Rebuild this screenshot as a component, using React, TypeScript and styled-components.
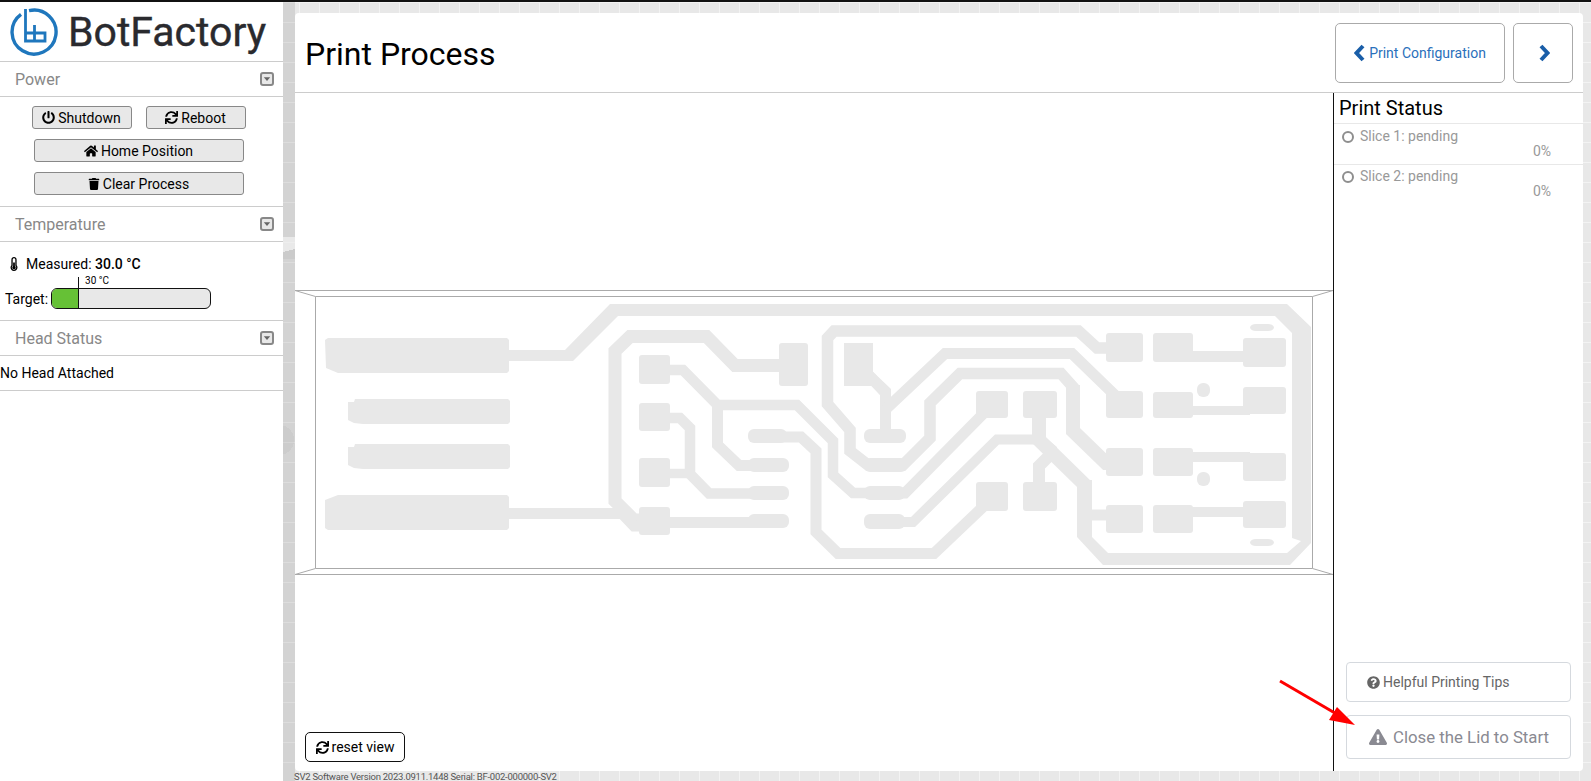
import React from "react";
import styled, { createGlobalStyle } from "styled-components";
import {
  FaExclamationTriangle,
  FaHome,
  FaPowerOff,
  FaQuestionCircle,
  FaSync,
  FaThermometerHalf,
  FaTrash,
} from "react-icons/fa";

const GlobalStyle = createGlobalStyle`
  html, body {
    margin: 0;
    height: 100%;
    overflow: hidden;
  }
  body {
    font-family: Roboto, "Liberation Sans", sans-serif;
    font-size: 14px;
    color: #000;
    background-color: #e8e8e8;
    background-image:
      linear-gradient(to right, #f3f3f3 1px, transparent 1px),
      linear-gradient(to bottom, #f3f3f3 1px, transparent 1px);
    background-size: 20px 20px;
    background-position: 19px 2px;
  }
  * {
    box-sizing: border-box;
  }
`;

const Shell = styled.div`
  position: relative;
  display: grid;
  grid-template-columns: 283px 12px 1fr;
  height: 781px;
  border-top: 2px solid #111;
  overflow: hidden;
`;

const Sidebar = styled.aside`
  background: #fff;
  display: flex;
  flex-direction: column;
`;

const Rail = styled.div`
  background:
    radial-gradient(circle 15px at -4px 438px, rgba(0, 0, 0, 0.035) 100%, transparent 100%),
    linear-gradient(165deg, rgba(255, 255, 255, 0.5) 60%, rgba(0, 0, 0, 0.04) 60%) 0 235px / 12px 22px no-repeat,
    rgba(0, 0, 0, 0.09);
`;

const LogoBar = styled.div`
  height: 60px;
  display: flex;
  align-items: center;
  gap: 9px;
  padding-left: 9px;
  border-bottom: 1px solid #ccc;
`;

const LogoText = styled.span`
  font-size: 41px;
  font-weight: 400;
  line-height: 1;
  color: #2a2a2e;
  margin-top: 1px;
  -webkit-text-stroke: 0.4px #2a2a2e;
`;

const SectionHeader = styled.div`
  height: 35px;
  display: flex;
  align-items: center;
  justify-content: space-between;
  padding: 0 9px 0 15px;
  font-size: 16px;
  color: #888;
  border-bottom: 1px solid #ccc;
`;

const PowerBody = styled.div`
  display: flex;
  flex-direction: column;
  align-items: center;
  gap: 10px;
  padding: 9px 6px 11px 0;
  border-bottom: 1px solid #ccc;
`;

const ButtonRow = styled.div`
  display: flex;
  gap: 14px;
`;

const ToolButton = styled.button<{ $width: number }>`
  width: ${(p) => p.$width}px;
  height: 23px;
  padding: 0;
  display: flex;
  align-items: center;
  justify-content: center;
  gap: 3px;
  font-family: inherit;
  font-size: 14px;
  color: #000;
  background: #e8e8e8;
  border: 1px solid #888;
  border-radius: 3px;
`;

const TemperatureBody = styled.div`
  height: 79px;
  padding: 13px 0 0 5px;
  border-bottom: 1px solid #ccc;
`;

const Measured = styled.div`
  display: flex;
  align-items: center;
  gap: 5px;
  padding-left: 2px;
  height: 18px;

  b {
    font-weight: 500;
  }
`;

const TargetRow = styled.div`
  display: flex;
  align-items: center;
  gap: 3px;
  margin-top: 15px;
  height: 21px;
`;

const TargetBar = styled.div`
  position: relative;
  width: 160px;
  height: 21px;
  background: #e8e8e8;
  border: 1px solid #111;
  border-radius: 6px;
`;

const TargetFill = styled.div`
  height: 100%;
  background: #66c136;
  border-right: 1px solid #111;
  border-radius: 5px 0 0 5px;
`;

const TargetTick = styled.span`
  position: absolute;
  left: 26px;
  top: -12px;
  height: 12px;
  border-left: 1px solid #111;
`;

const TargetLabel = styled.span`
  position: absolute;
  left: 33px;
  top: -14px;
  font-size: 10px;
  line-height: 12px;
  white-space: nowrap;
`;

const HeadBody = styled.div`
  height: 35px;
  display: flex;
  align-items: center;
  border-bottom: 1px solid #ccc;
`;

const Content = styled.div`
  display: flex;
  flex-direction: column;
  padding: 11px 8px 0 0;
  min-width: 0;
`;

const Card = styled.main`
  flex: none;
  height: 758px;
  display: flex;
  flex-direction: column;
  background: #fff;
  border-radius: 4px;
`;

const CardHeader = styled.header`
  height: 80px;
  flex: none;
  display: flex;
  align-items: center;
  justify-content: space-between;
  padding: 0 10px 0 10px;
  border-bottom: 1px solid #ccc;
`;

const Title = styled.h1`
  margin: 3px 0 0;
  font-size: 32px;
  font-weight: 400;
`;

const NavGroup = styled.nav`
  display: flex;
  gap: 8px;
  margin-top: 1px;
`;

const NavButton = styled.button<{ $width: number }>`
  width: ${(p) => p.$width}px;
  height: 60px;
  padding: 0 0 0 ${(p) => (p.$width > 100 ? 0 : 1)}px;
  display: flex;
  align-items: center;
  justify-content: center;
  gap: 3px;
  font-family: inherit;
  font-size: 14px;
  color: #2a70bb;
  background: #fff;
  border: 1px solid #aaa;
  border-radius: 5px;
`;

const CardBody = styled.div`
  flex: 1;
  display: flex;
  min-height: 0;
`;

const Canvas = styled.section`
  position: relative;
  flex: 1;
  min-width: 0;
`;

const Board = styled.svg`
  display: block;
  width: 100%;
  height: 100%;
`;

const Trace = styled.path<{ $w: number }>`
  fill: none;
  stroke: #e8e8e8;
  stroke-width: ${(p) => p.$w};
  stroke-linejoin: miter;
`;

const Copper = styled.polygon`
  fill: #e8e8e8;
`;

const Pad = styled.rect`
  fill: #e8e8e8;
`;

const Frame = styled.path`
  fill: none;
  stroke: #aaa;
  stroke-width: 1;
`;

const ResetButton = styled.button`
  position: absolute;
  left: 10px;
  bottom: 9px;
  width: 100px;
  height: 30px;
  padding: 0;
  display: flex;
  align-items: center;
  justify-content: center;
  gap: 3px;
  font-family: inherit;
  font-size: 14px;
  color: #000;
  background: #fff;
  border: 1px solid #111;
  border-radius: 5px;
`;

const StatusPanel = styled.aside`
  width: 250px;
  flex: none;
  display: flex;
  flex-direction: column;
  border-left: 1px solid #111;
`;

const StatusTitle = styled.h2`
  margin: 0;
  height: 31px;
  padding-left: 5px;
  font-size: 20px;
  font-weight: 400;
  line-height: 30px;
  border-bottom: 1px solid #e8e8e8;
`;

const Slice = styled.div`
  height: 40px;
  padding: 4px 32px 0 8px;
  color: #999;

  & + & {
    border-top: 1px solid #e8e8e8;
    padding-top: 3px;
  }
`;

const SliceName = styled.div`
  display: flex;
  align-items: center;
  gap: 6px;
  line-height: 17px;
`;

const SliceDot = styled.span`
  width: 12px;
  height: 12px;
  border: 2px solid #8e8e8e;
  border-radius: 50%;
`;

const SlicePercent = styled.div`
  text-align: right;
  line-height: 17px;
  margin-top: -2px;
`;

const StatusActions = styled.div`
  margin-top: auto;
  display: flex;
  flex-direction: column;
  gap: 13px;
  padding: 0 12px 12px 12px;
`;

const TipsButton = styled.button`
  height: 40px;
  padding: 0 0 0 20px;
  display: flex;
  align-items: center;
  gap: 3px;
  font-family: inherit;
  font-size: 14px;
  color: #666;
  background: #fff;
  border: 1px solid #d5d9de;
  border-radius: 4px;
`;

const StartButton = styled.button`
  height: 44px;
  padding: 0 0 0 22px;
  display: flex;
  align-items: center;
  gap: 6px;
  font-family: inherit;
  font-size: 16.8px;
  color: #8a8a92;
  background: #fff;
  border: 1px solid #d5d9de;
  border-radius: 4px;
`;

const Footer = styled.footer`
  margin-left: -1px;
  font-size: 9.5px;
  letter-spacing: -0.25px;
  line-height: 12px;
  color: #555;
  white-space: nowrap;
`;

const Annotation = styled.svg`
  position: absolute;
  left: 1270px;
  top: 668px;
  pointer-events: none;
`;

const Chevron = () => (
  <svg width="14" height="14" viewBox="0 0 14 14">
    <rect x="1" y="1" width="12" height="12" rx="2" fill="#e8e8e8" stroke="#888" strokeWidth="2" />
    <path d="M3.8 5.2h6.4L7 9z" fill="#666" />
  </svg>
);

const NavArrow = ({ flip }: { flip?: boolean }) => (
  <svg width="12" height="18" viewBox="0 0 12 18">
    <path
      d={flip ? "M3 2L9.5 9L3 16" : "M9 2L2.5 9L9 16"}
      fill="none"
      stroke="#1a5ea8"
      strokeWidth="4"
    />
  </svg>
);

const LogoMark = () => (
  <svg width="50" height="50" viewBox="9 6 50 50">
    <path d="M29 9.6A22 22 0 1 1 21 13.3" fill="none" stroke="#1f77bd" strokeWidth="3.4" />
    <path
      d="M25.5 8V40H45V32H25.5M34.5 24V40"
      fill="none"
      stroke="#1f77bd"
      strokeWidth="2.8"
    />
  </svg>
);

const traces: { d: string; w: number }[] = [
  { d: "M779 365.5H735L706.5 336.5H630L615 351V501L634 520H645", w: 13 },
  { d: "M509 513.5H622L634 526H645", w: 11 },
  { d: "M660 370H683L717.5 405H797L833 441V475L853 493H870", w: 10.5 },
  { d: "M717.5 405V445L739 465.5H760", w: 11 },
  { d: "M660 418H680L690 428V474L709 493.5H760", w: 10.5 },
  { d: "M660 473.5H690", w: 9.5 },
  { d: "M660 522.5H760", w: 11 },
  { d: "M770 437H801L816 451V532L838 553.5H934L985 505", w: 11 },
  { d: "M1110 348H1097L1078.5 331H834L827.5 338V404L850 430V451L868 465H903L930 438V403L960 373.5H1061L1073 387V430", w: 11.5 },
  { d: "M1073 385V431L1106 463H1115", w: 14 },
  { d: "M885.5 432V393L860 366", w: 11 },
  { d: "M885.5 409.5L945 353.5H1072L1122 402", w: 11 },
  { d: "M895 493H905L985 412", w: 11 },
  { d: "M895 522H913L997 439.5H1040L1054 451", w: 10 },
  { d: "M1054 451L1039 466V490", w: 12 },
  { d: "M1039 415V440L1085 485", w: 14 },
  { d: "M1085 515H1110", w: 11 },
  { d: "M1185 356.5H1250", w: 11 },
  { d: "M1185 410.5H1250", w: 9 },
  { d: "M1185 457H1250", w: 10 },
  { d: "M1185 512H1250", w: 10 },
];

const copper: string[] = [
  "325,340 328,338 507,338 509,340 509,371 507,373 338,373 326,368",
  "338,495 507,495 509,497 509,528 507,530 328,530 325,528 325,500",
  "348,402 354,402 355,399 508,399 510,401 510,422 508,424 363,424 354,423 348,420",
  "348,447 354,447 355,444 508,444 510,446 510,467 508,469 363,469 354,468 348,465",
  "509,350 565,350 610,304 1287,304 1311,327 1311,543 1290,565 1103,565 1077,537 1077,480 1092,480 1092,537 1108,553 1287,553 1301,541 1292,538 1292,333 1275,316 618,316 573,361 509,361",
  "844,343 873,343 873,372 891,389 891,400 880,400 880,393 873,386 844,386",
];

const pads: [number, number, number, number][] = [
  [639, 355, 31, 29],
  [639, 403, 31, 28],
  [639, 458, 31, 29],
  [639, 507, 31, 28],
  [779, 343, 29, 43],
  [748, 429, 39, 14],
  [748, 458, 41, 14],
  [748, 486, 41, 14],
  [748, 514, 41, 14],
  [864, 429, 42, 14],
  [864, 458, 43, 14],
  [864, 486, 41, 14],
  [864, 514, 41, 15],
  [976, 391, 32, 27],
  [976, 482, 32, 29],
  [1023, 391, 34, 27],
  [1023, 482, 34, 29],
  [1106, 333, 37, 29],
  [1106, 391, 37, 27],
  [1106, 448, 37, 28],
  [1106, 505, 37, 28],
  [1153, 333, 40, 29],
  [1153, 392, 40, 26],
  [1153, 448, 40, 28],
  [1153, 505, 40, 28],
  [1243, 338, 43, 29],
  [1243, 387, 43, 27],
  [1243, 453, 43, 28],
  [1243, 501, 43, 27],
  [1197, 383, 13, 14],
  [1197, 472, 13, 14],
  [1250, 324, 24, 7],
  [1250, 539, 24, 7],
];

const slices = ["Slice 1: pending", "Slice 2: pending"];

const App = () => {
  return (
    <>
      <GlobalStyle />
      <Shell>
        <Sidebar>
          <LogoBar>
            <LogoMark />
            <LogoText>BotFactory</LogoText>
          </LogoBar>
          <SectionHeader>
            Power
            <Chevron />
          </SectionHeader>
          <PowerBody>
            <ButtonRow>
              <ToolButton $width={100}>
                <FaPowerOff size={13} /> Shutdown
              </ToolButton>
              <ToolButton $width={100}>
                <FaSync size={13} /> Reboot
              </ToolButton>
            </ButtonRow>
            <ToolButton $width={210}>
              <FaHome size={14} /> Home Position
            </ToolButton>
            <ToolButton $width={210}>
              <FaTrash size={12} /> Clear Process
            </ToolButton>
          </PowerBody>
          <SectionHeader>
            Temperature
            <Chevron />
          </SectionHeader>
          <TemperatureBody>
            <Measured>
              <FaThermometerHalf size={14} />
              <span>
                Measured: <b>30.0 °C</b>
              </span>
            </Measured>
            <TargetRow>
              Target:
              <TargetBar>
                <TargetFill style={{ width: "17%" }} />
                <TargetTick />
                <TargetLabel>30 °C</TargetLabel>
              </TargetBar>
            </TargetRow>
          </TemperatureBody>
          <SectionHeader>
            Head Status
            <Chevron />
          </SectionHeader>
          <HeadBody>No Head Attached</HeadBody>
        </Sidebar>
        <Rail />
        <Content>
          <Card>
            <CardHeader>
              <Title>Print Process</Title>
              <NavGroup>
                <NavButton $width={170}>
                  <NavArrow /> Print Configuration
                </NavButton>
                <NavButton $width={60}>
                  <NavArrow flip />
                </NavButton>
              </NavGroup>
            </CardHeader>
            <CardBody>
              <Canvas>
                <Board viewBox="295 93 1038 678" preserveAspectRatio="none">
                  <Frame d="M295 290.5H1333M295 574.5H1333M315.5 296.5H1312.5V568.5H315.5ZM295 290.5L315.5 296.5M1333 290.5L1312.5 296.5M295 574.5L315.5 568.5M1333 574.5L1312.5 568.5" />
                  {copper.map((points) => (
                    <Copper key={points} points={points} />
                  ))}
                  {traces.map((t) => (
                    <Trace key={t.d} d={t.d} $w={t.w} />
                  ))}
                  {pads.map(([x, y, w, h]) => (
                    <Pad key={`${x}-${y}`} x={x} y={y} width={w} height={h} rx={h <= 15 ? 6 : 3} />
                  ))}
                </Board>
                <ResetButton>
                  <FaSync size={13} /> reset view
                </ResetButton>
              </Canvas>
              <StatusPanel>
                <StatusTitle>Print Status</StatusTitle>
                {slices.map((name) => (
                  <Slice key={name}>
                    <SliceName>
                      <SliceDot />
                      {name}
                    </SliceName>
                    <SlicePercent>0%</SlicePercent>
                  </Slice>
                ))}
                <StatusActions>
                  <TipsButton>
                    <FaQuestionCircle size={13} /> Helpful Printing Tips
                  </TipsButton>
                  <StartButton>
                    <FaExclamationTriangle size={18} /> Close the Lid to Start
                  </StartButton>
                </StatusActions>
              </StatusPanel>
            </CardBody>
          </Card>
          <Footer>SV2 Software Version 2023.0911.1448 Serial: BF-002-000000-SV2</Footer>
        </Content>
        <Annotation width="90" height="60" viewBox="1270 668 90 60">
          <path d="M1280 679L1340 714" stroke="#f00" strokeWidth="3" fill="none" />
          <path d="M1355 723L1337 705L1329 718Z" fill="#f00" />
        </Annotation>
      </Shell>
    </>
  );
};

export default App;
